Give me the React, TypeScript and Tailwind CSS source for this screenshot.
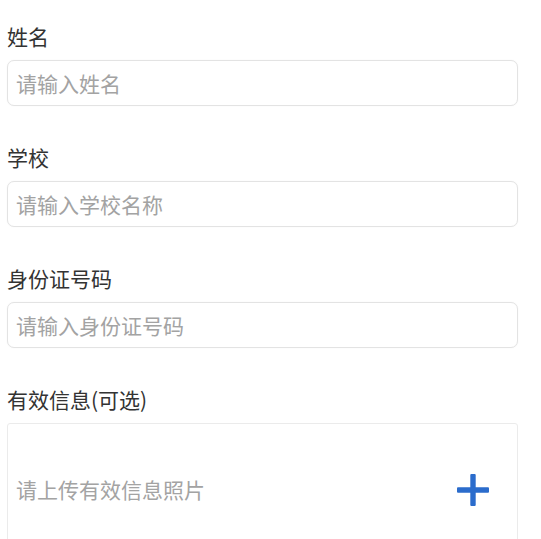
import React from 'react';

const font = { fontFamily: '"Noto Sans CJK SC", "Noto Sans", sans-serif' };

const Field: React.FC<{ label: string; placeholder: string }> = ({ label, placeholder }) => (
  <div className="mb-[38px]">
    <div className="text-[21px] leading-[26px] text-[#333333]">{label}</div>
    <div className="mt-[11px] h-[46px] rounded-[7px] border border-[#e3e3e3] bg-white flex items-center px-[8px] shadow-[0_0_2px_rgba(0,0,0,0.04)]">
      <span className="text-[21px] leading-[28px] text-[#a3a3a3] -mt-[1px]">{placeholder}</span>
    </div>
  </div>
);

export default function App() {
  return (
    <div className="w-[541px] h-[539px] overflow-hidden bg-white" style={font}>
      <div className="pt-[23px] pl-[7px] w-[518px]">
        <Field label="姓名" placeholder="请输入姓名" />
        <Field label="学校" placeholder="请输入学校名称" />
        <Field label="身份证号码" placeholder="请输入身份证号码" />
        <div>
          <div className="text-[21px] leading-[26px] text-[#333333]">有效信息(可选)</div>
          <div className="mt-[11px] h-[134px] rounded-[3px] border border-[#ebebeb] bg-white flex items-center justify-between pl-[8px] pr-[27px]">
            <span className="text-[21px] text-[#a3a3a3]">请上传有效信息照片</span>
            <svg width="34" height="34" viewBox="0 0 34 34">
              <rect x="14.3" y="1" width="5.4" height="32" rx="1" fill="#2b6ccc" />
              <rect x="1" y="14.3" width="32" height="5.4" rx="1" fill="#2b6ccc" />
            </svg>
          </div>
        </div>
      </div>
    </div>
  );
}
